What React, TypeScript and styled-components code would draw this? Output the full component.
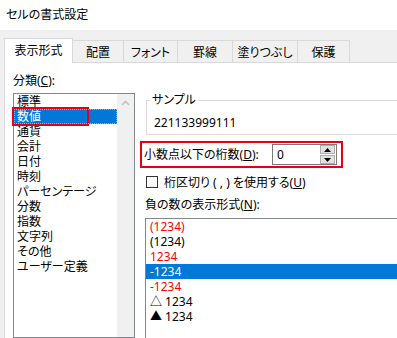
import styled, { createGlobalStyle } from 'styled-components'

const GlobalStyle = createGlobalStyle`
  * { box-sizing: border-box; }
  body { margin: 0; background: #f0f0f0; }
`

const Dialog = styled.div`
  width: 397px;
  height: 338px;
  overflow: hidden;
  display: flex;
  flex-direction: column;
  background: #f0f0f0;
  color: #000;
  font-family: 'Noto Sans', 'Noto Sans CJK JP', sans-serif;
  font-size: 12px;
  font-feature-settings: 'palt';
`

const TitleBar = styled.div`
  flex-shrink: 0;
  height: 30px;
  line-height: 30px;
  padding-left: 6px;
  background: #fff;
`

const TabStrip = styled.div`
  flex-shrink: 0;
  display: flex;
  align-items: flex-end;
  height: 32px;
  padding: 8px 0 0 4px;
`

const Tab = styled.div<{ $w: number; $active?: boolean }>`
  position: relative;
  z-index: ${(p) => (p.$active ? 1 : 0)};
  width: ${(p) => p.$w}px;
  height: ${(p) => (p.$active ? 25 : 22)}px;
  margin: 0 -1px ${(p) => (p.$active ? -1 : 0)}px 0;
  display: flex;
  align-items: center;
  justify-content: center;
  padding-bottom: ${(p) => (p.$active ? 2 : 0)}px;
  border: 1px solid #d9d9d9;
  border-bottom: none;
  background: ${(p) => (p.$active ? '#fff' : '#f0f0f0')};
`

const Panel = styled.div`
  flex: 1;
  display: flex;
  width: 430px;
  margin-left: 4px;
  background: #fff;
  border-top: 1px solid #d9d9d9;
  border-left: 1px solid #d9d9d9;
`

const LeftCol = styled.div`
  display: flex;
  flex-direction: column;
  width: 130px;
  padding: 10px 0 0 8px;
`

const Label = styled.div<{ $indent?: number }>`
  line-height: 16px;
  margin-left: ${(p) => p.$indent ?? 0}px;
  white-space: nowrap;
`

const CategoryList = styled.div`
  flex: 1;
  display: flex;
  margin-top: 4px;
  width: 122px;
  border: 1px solid #828790;
`

const Items = styled.div`
  flex: 1;
`

const Item = styled.div<{ $selected?: boolean; $focus?: boolean; $red?: boolean; $pad?: number }>`
  height: 15px;
  line-height: 15px;
  padding-left: ${(p) => p.$pad ?? 0}px;
  white-space: nowrap;
  color: ${(p) => (p.$selected ? '#fff' : p.$red ? '#ff0000' : '#000')};
  background: ${(p) => (p.$selected ? '#0078d7' : 'transparent')};
  outline: ${(p) => (p.$focus ? '1px dotted #ff9a3c' : 'none')};
  outline-offset: -1px;
`

const ItemText = styled.span<{ $marked?: boolean }>`
  display: block;
  width: ${(p) => (p.$marked ? '73px' : 'auto')};
  height: 15px;
  padding-left: 3px;
  outline: ${(p) => (p.$marked ? '2px solid #e60012' : 'none')};
`

const ScrollBar = styled.div`
  width: 17px;
  background: #f0f0f0;
  display: flex;
  flex-direction: column;
  align-items: center;
`

const ScrollButton = styled.div`
  height: 17px;
  display: flex;
  align-items: center;
  justify-content: center;
`

const RightCol = styled.div`
  flex: 1;
  display: flex;
  flex-direction: column;
  margin-left: 5px;
  padding-top: 29px;
`

const SampleBox = styled.fieldset`
  margin: 0 0 0 6px;
  padding: 7px 0 3px 0;
  border: 1px solid #dcdcdc;
  min-width: 0;

  legend {
    margin-left: 3px;
    padding: 0 2px;
    line-height: 16px;
    color: #000;
  }
`

const SampleValue = styled.div`
  line-height: 16px;
  padding-left: 7px;
`

const DecimalRow = styled.div`
  margin-top: 6px;
  width: 203px;
  height: 27px;
  display: flex;
  align-items: center;
  justify-content: space-between;
  padding: 0 4px 0 2px;
  border: 2px solid #e60012;
`

const SpinBox = styled.div`
  width: 65px;
  height: 21px;
  display: flex;
  align-items: center;
  padding-left: 4px;
  border: 1px solid #7a7a7a;
`

const SpinValue = styled.div`
  flex: 1;
  line-height: 16px;
`

const SpinButtons = styled.div`
  display: flex;
  flex-direction: column;
  gap: 1px;
  margin-right: 1px;
`

const SpinButton = styled.div`
  width: 15px;
  height: 9px;
  display: flex;
  align-items: center;
  justify-content: center;
  background: #e1e1e1;
  border: 1px solid #adadad;
`

const CheckRow = styled.label`
  margin: 6px 0 0 6px;
  height: 16px;
  display: flex;
  align-items: center;
  gap: 6px;
  white-space: nowrap;
`

const CheckBox = styled.span`
  width: 12px;
  height: 12px;
  border: 1px solid #333;
  background: #fff;
`

const NegList = styled.div`
  flex: 1;
  margin: 5px 0 0 5px;
  border: 1px solid #828790;
  border-bottom: none;
`

const categories = [
  '標準',
  '数値',
  '通貨',
  '会計',
  '日付',
  '時刻',
  'パーセンテージ',
  '分数',
  '指数',
  '文字列',
  'その他',
  'ユーザー定義',
]

const negatives = [
  { text: '(1234)', red: true },
  { text: '(1234)' },
  { text: '1234', red: true },
  { text: '-1234', selected: true },
  { text: '-1234', red: true },
  { text: '△ 1234' },
  { text: '▲ 1234' },
]

const tabs = [
  { label: '表示形式', w: 69 },
  { label: '配置', w: 52 },
  { label: 'フォント', w: 55 },
  { label: '罫線', w: 56 },
  { label: '塗りつぶし', w: 66 },
  { label: '保護', w: 53 },
]

const Triangle = ({ down }: { down?: boolean }) => (
  <svg width="7" height="4" viewBox="0 0 7 4">
    <path d={down ? 'M0 0h7L3.5 4z' : 'M0 4h7L3.5 0z'} fill="#000" />
  </svg>
)

const App = () => {
  return (
    <>
      <GlobalStyle />
      <Dialog>
        <TitleBar>セルの書式設定</TitleBar>
        <TabStrip>
          {tabs.map((t, i) => (
            <Tab key={t.label} $w={t.w} $active={i === 0}>
              {t.label}
            </Tab>
          ))}
        </TabStrip>
        <Panel>
          <LeftCol>
            <Label>
              分類(<u>C</u>):
            </Label>
            <CategoryList>
              <Items>
                {categories.map((c) => (
                  <Item key={c} $selected={c === '数値'} $focus={c === '数値'}>
                    <ItemText $marked={c === '数値'}>{c}</ItemText>
                  </Item>
                ))}
              </Items>
              <ScrollBar>
                <ScrollButton>
                  <svg width="9" height="6" viewBox="0 0 9 6">
                    <path d="M1 5L4.5 1.5L8 5" fill="none" stroke="#c2c2c2" strokeWidth="1.6" />
                  </svg>
                </ScrollButton>
              </ScrollBar>
            </CategoryList>
          </LeftCol>
          <RightCol>
            <SampleBox>
              <legend>サンプル</legend>
              <SampleValue>221133999111</SampleValue>
            </SampleBox>
            <DecimalRow>
              <Label>
                小数点以下の桁数(<u>D</u>):
              </Label>
              <SpinBox>
                <SpinValue>0</SpinValue>
                <SpinButtons>
                  <SpinButton>
                    <Triangle />
                  </SpinButton>
                  <SpinButton>
                    <Triangle down />
                  </SpinButton>
                </SpinButtons>
              </SpinBox>
            </DecimalRow>
            <CheckRow>
              <CheckBox />
              <span>
                桁区切り ( , ) を使用する(<u>U</u>)
              </span>
            </CheckRow>
            <Label $indent={5} style={{ marginTop: 7 }}>
              負の数の表示形式(<u>N</u>):
            </Label>
            <NegList>
              {negatives.map((n, i) => (
                <Item key={i} $pad={4} $red={n.red} $selected={n.selected}>
                  {n.text}
                </Item>
              ))}
            </NegList>
          </RightCol>
        </Panel>
      </Dialog>
    </>
  )
}

export default App
